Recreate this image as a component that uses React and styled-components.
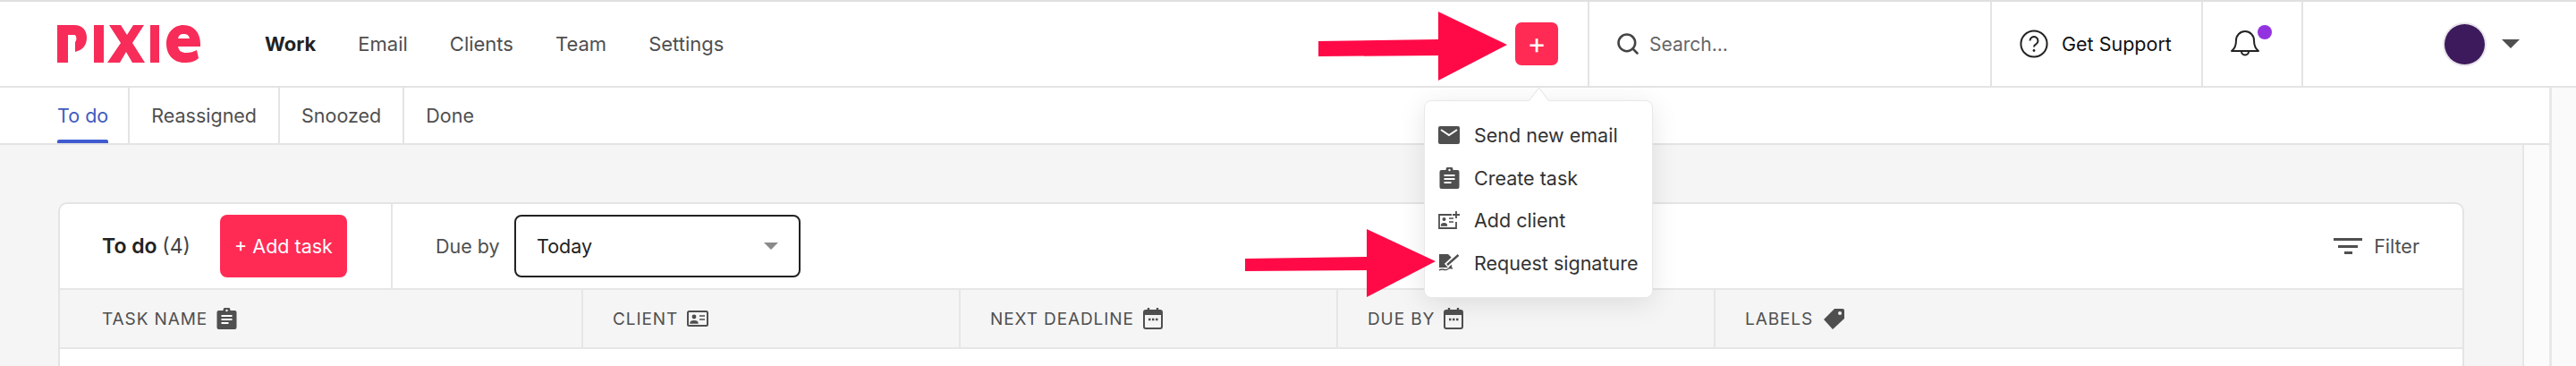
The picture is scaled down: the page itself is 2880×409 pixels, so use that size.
import React from 'react'
import styled, { createGlobalStyle } from 'styled-components'
import { Search } from 'lucide-react'

const pink = '#ff2b55'
const ink = '#4f4f4f'

const Global = createGlobalStyle`
  html, body { margin: 0; padding: 0; height: 409px; overflow: hidden; background: #f5f5f5; }
  body { font-family: Inter, "Liberation Sans", sans-serif; color: #333; }
`
const Page = styled.div`
  position: relative;
  width: 2880px;
  height: 409px;
  overflow: hidden;
  display: flex;
  flex-direction: column;
`
const TopBar = styled.header`
  height: 94px;
  flex-shrink: 0;
  display: flex;
  align-items: stretch;
  background: #fff;
  border-top: 2px solid #e0e0e0;
  border-bottom: 2px solid #e4e4e4;
`
const Logo = styled.svg`
  width: 160px;
  height: 42px;
  margin: 26px 0 0 64px;
  flex-shrink: 0;
`
const Nav = styled.nav`
  display: flex;
  align-items: center;
  gap: 47px;
  margin-left: 72px;
  flex: 1;
  font-size: 22px;
  color: ${ink};
`
const NavLink = styled.span`
  font-weight: ${p => (p.$active ? 700 : 400)};
  color: ${p => (p.$active ? '#222' : ink)};
`
const PlusCell = styled.div`
  width: 81px;
  display: flex;
  align-items: center;
  flex-shrink: 0;
`
const PlusButton = styled.button`
  width: 48px;
  height: 48px;
  border: 0;
  padding: 0;
  border-radius: 7px;
  background: ${pink};
  color: #fff;
  font: 400 32px/48px Inter, sans-serif;
`
const Cell = styled.div`
  display: flex;
  align-items: center;
  width: ${p => p.$w}px;
  flex-shrink: 0;
  border-left: 2px solid #e4e4e4;
  box-sizing: border-box;
  padding-left: ${p => p.$pad || 0}px;
`
const SearchText = styled.span`
  font-size: 21px;
  color: #666;
  margin-left: 10px;
`
const SupportText = styled.span`
  font-size: 21.5px;
  color: #111;
  margin-left: 15px;
`
const Bell = styled.div`
  position: relative;
  width: 48px;
  height: 36px;
`
const BellDot = styled.span`
  position: absolute;
  left: 31px;
  top: -3px;
  width: 16px;
  height: 16px;
  border-radius: 50%;
  background: #9333e0;
`
const Avatar = styled.span`
  width: 45px;
  height: 45px;
  border-radius: 50%;
  background: #3d1a5c;
  box-shadow: 0 0 0 2px #e8e4ea;
`
const Caret = styled.span`
  display: block;
  width: 0;
  height: 0;
  border-left: ${p => p.$size}px solid transparent;
  border-right: ${p => p.$size}px solid transparent;
  border-top: ${p => p.$size}px solid ${p => p.$color};
`
const AvatarCaret = styled(Caret)`
  margin-left: 19px;
`
const Tabs = styled.div`
  height: 62px;
  flex-shrink: 0;
  width: 2850px;
  display: flex;
  background: #fff;
  border-bottom: 2px solid #e4e4e4;
`
const Tab = styled.div`
  position: relative;
  display: flex;
  align-items: center;
  padding: 0 ${p => (p.$active ? 22 : 24)}px 0 24px;
  font-size: 21.5px;
  color: ${p => (p.$active ? '#3f5bbf' : ink)};
  border-right: ${p => (p.$last ? 0 : '2px solid #e4e4e4')};
  &:first-child { margin-left: 40px; }
  ${p => p.$active && `
    &::after {
      content: '';
      position: absolute;
      left: 24px;
      right: 22px;
      bottom: 0;
      height: 4px;
      border-radius: 2px 2px 0 0;
      background: #3f5bd0;
    }
  `}
`
const Body = styled.main`
  flex: 1;
  display: flex;
  min-height: 0;
`
const Content = styled.div`
  width: 2820px;
  flex-shrink: 0;
  box-sizing: border-box;
  padding: 64px 65px 0;
`
const ScrollTrack = styled.div`
  width: 30px;
  flex-shrink: 0;
  box-sizing: border-box;
  background: #fbfbfb;
  border-left: 2px solid #e6e6e6;
`
const ScrollEdge = styled.div`
  flex: 1;
  background: #fafafa;
  border-left: 3px solid #e8e8e8;
  margin-top: -64px;
`
const Card = styled.section`
  width: 2690px;
  background: #fff;
  border: 2px solid #e4e4e4;
  border-bottom: 0;
  border-radius: 10px 10px 0 0;
  box-sizing: border-box;
  height: 200px;
`
const Toolbar = styled.div`
  height: 94px;
  display: flex;
  align-items: stretch;
  border-bottom: 2px solid #e6e6e6;
`
const ToolLeft = styled.div`
  width: 372px;
  display: flex;
  align-items: center;
  padding-left: 47px;
  box-sizing: border-box;
  border-right: 2px solid #e6e6e6;
`
const ToolTitle = styled.span`
  font-size: 23px;
  font-weight: 600;
  color: #222;
  width: 132px;
`
const ToolCount = styled.span`
  font-weight: 400;
  color: #444;
`
const AddButton = styled.button`
  width: 142px;
  height: 70px;
  border: 0;
  border-radius: 8px;
  background: ${pink};
  color: #fff;
  font: 400 21.5px Inter, sans-serif;
`
const ToolRight = styled.div`
  flex: 1;
  display: flex;
  align-items: center;
  padding: 0 48px;
`
const DueLabel = styled.span`
  font-size: 21.5px;
  color: ${ink};
  width: 88px;
`
const Select = styled.div`
  width: 320px;
  height: 70px;
  box-sizing: border-box;
  border: 2px solid #222;
  border-radius: 8px;
  display: flex;
  align-items: center;
  justify-content: space-between;
  padding: 0 23px;
  font-size: 21.5px;
  color: #222;
`
const FilterBox = styled.div`
  margin-left: auto;
  display: flex;
  align-items: center;
  gap: 13px;
  font-size: 21.5px;
  color: ${ink};
`
const HeadRow = styled.div`
  height: 64px;
  display: flex;
  background: #f5f5f5;
  border-bottom: 2px solid #e6e6e6;
`
const HeadCell = styled.div`
  width: ${p => p.$w}px;
  box-sizing: border-box;
  display: flex;
  align-items: center;
  gap: 10px;
  padding-left: ${p => p.$pad || 33}px;
  border-right: ${p => (p.$last ? 0 : '2px solid #e6e6e6')};
  font-size: 19px;
  letter-spacing: 0.9px;
  color: ${ink};
  flex-shrink: 0;
  svg { flex-shrink: 0; }
`
const Dropdown = styled.div`
  position: absolute;
  left: 1592px;
  top: 112px;
  width: 256px;
  height: 221px;
  box-sizing: border-box;
  padding: 20px 15px;
  background: #fff;
  border-radius: 8px;
  border: 1px solid #e8e8e8;
  box-shadow: 0 6px 30px rgba(0, 0, 0, 0.1);
  display: flex;
  flex-direction: column;
  justify-content: space-between;
  &::before {
    content: '';
    position: absolute;
    left: 118px;
    top: -10px;
    width: 18px;
    height: 18px;
    background: #fff;
    border-top: 1px solid #e4e4e4;
    border-left: 1px solid #e4e4e4;
    transform: rotate(45deg) skew(8deg, 8deg);
  }
`
const MenuItem = styled.div`
  display: flex;
  align-items: center;
  gap: 16px;
  font-size: 21.5px;
  color: #333;
  height: 36px;
  white-space: nowrap;
  position: relative;
`
const MenuIcon = styled.span`
  width: 24px;
  height: 24px;
  display: flex;
  align-items: center;
  justify-content: center;
  flex-shrink: 0;
`
const Arrow = styled.svg`
  position: absolute;
  left: 0;
  top: 0;
  width: 2880px;
  height: 409px;
  pointer-events: none;
`

const MailIcon = () => (
  <svg width="24" height="20" viewBox="0 0 24 20">
    <rect width="24" height="20" rx="2" fill={ink} />
    <path d="M3 4l9 6 9-6" stroke="#fff" strokeWidth="2" fill="none" />
  </svg>
)
const TaskIcon = () => (
  <svg width="23" height="24" viewBox="0 0 22 24">
    <path d="M2 3h5a4 4 0 0 1 8 0h5a2 2 0 0 1 2 2v17a2 2 0 0 1-2 2H2a2 2 0 0 1-2-2V5a2 2 0 0 1 2-2z" fill={ink} />
    <path d="M5 9h12M5 13h12M5 17h8" stroke="#fff" strokeWidth="2" />
    <circle cx="11" cy="3" r="1.2" fill="#fff" />
  </svg>
)
const ClientIcon = () => (
  <svg width="24" height="18" viewBox="0 0 24 18">
    <rect x="1" y="1" width="22" height="16" rx="1.5" fill="none" stroke={ink} strokeWidth="2" />
    <circle cx="8" cy="7" r="2.4" fill={ink} />
    <path d="M4 14c0-3 8-3 8 0zM14 6h6M14 10h6" fill={ink} stroke={ink} strokeWidth="1.4" />
  </svg>
)
const AddClientIcon = () => (
  <svg width="24" height="20" viewBox="0 0 24 20">
    <path d="M15 4H1v15h19v-7" fill="none" stroke={ink} strokeWidth="1.8" />
    <circle cx="6.500" cy="9" r="2" fill={ink} />
    <path d="M3.500 16c0-3 6-3 6 0zM12 8h5M12 12h5" fill={ink} stroke={ink} strokeWidth="1.3" />
    <path d="M20 0v8M16 4h8" stroke={ink} strokeWidth="1.8" />
  </svg>
)
const SignIcon = () => (
  <svg width="24" height="19" viewBox="0 0 24 19">
    <path d="M1 0h10l4 4v11H1z" fill={ink} />
    <path d="M9 13L22 1" stroke="#fff" strokeWidth="6" />
    <path d="M10 12L22.500 1" stroke={ink} strokeWidth="2.400" />
    <path d="M1 18c4-3 6 1 9-1s4-2 6-1" stroke={ink} strokeWidth="1.400" fill="none" />
  </svg>
)
const CalendarIcon = () => (
  <svg width="22" height="24" viewBox="0 0 22 24">
    <path d="M6 0v5M16 0v5" stroke={ink} strokeWidth="2.4" />
    <rect x="1" y="3" width="20" height="20" rx="2" fill="none" stroke={ink} strokeWidth="2" />
    <rect x="1" y="3" width="20" height="5" fill={ink} />
    <path d="M6 13h2.500M10 13h2.500M14 13h2.500" stroke={ink} strokeWidth="2.400" />
  </svg>
)
const TagIcon = () => (
  <svg width="26" height="25" viewBox="0 0 26 25">
    <path d="M14 1h9a2 2 0 0 1 2 2v9L12 24 2 13z" fill={ink} />
    <circle cx="20" cy="6" r="2" fill="#f5f5f5" />
  </svg>
)
const FilterIcon = () => (
  <svg width="32" height="18" viewBox="0 0 32 18">
    <path d="M0 1.500h32M5 9.500h22M12 16.500h9" stroke={ink} strokeWidth="3" />
  </svg>
)
const HelpIcon = () => (
  <svg width="32" height="32" viewBox="0 0 32 32">
    <circle cx="16" cy="16" r="14.600" fill="none" stroke="#222" strokeWidth="2" />
    <path d="M11.500 12.500a4.500 4.500 0 1 1 6.800 3.900c-1.500.9-2.300 1.600-2.300 3.100" fill="none" stroke="#222" strokeWidth="2" />
    <circle cx="16" cy="23.500" r="1.400" fill="#222" />
  </svg>
)
const BellIcon = () => (
  <svg width="34" height="34" viewBox="0 0 34 34">
    <path d="M2 26c4-3 5-6 5-12a10 10 0 0 1 20 0c0 6 1 9 5 12z" fill="none" stroke="#222" strokeWidth="2" strokeLinejoin="round" />
    <path d="M13 26.500a4 4 0 0 0 8 0" fill="none" stroke="#222" strokeWidth="2" />
  </svg>
)

const menu = [
  { label: 'Send new email', icon: <MailIcon /> },
  { label: 'Create task', icon: <TaskIcon /> },
  { label: 'Add client', icon: <AddClientIcon /> },
  { label: 'Request signature', icon: <SignIcon /> },
]

const App = () => (
  <Page>
    <Global />
    <TopBar>
      <Logo viewBox="0 0 160 42">
        <g fill="#f72c58" fillRule="evenodd">
          <path d="M0 0H19C28 0 33 6 33 14C33 23 28 28 20 30V19C22 18 22 11 19 11H12V42H0Z" />
          <rect x="41" y="0" width="11" height="42" />
          <path d="M58 0H71L78 11L85 0H97L84 20L98 42H84L77 30L70 42H56L71 20Z" />
          <rect x="104" y="0" width="10" height="42" />
          <path d="M141 0C153 0 160 9 160 21V24H135C136 29 139 31 144 31C149 31 152 30 156 28L158 37C154 41 149 42 142 42C130 42 122 33 122 21C122 9 130 0 141 0ZM135 15H148C147 11 145 10 141 10C138 10 136 11 135 15Z" />
        </g>
      </Logo>
      <Nav>
        <NavLink $active>Work</NavLink>
        <NavLink>Email</NavLink>
        <NavLink>Clients</NavLink>
        <NavLink>Team</NavLink>
        <NavLink>Settings</NavLink>
      </Nav>
      <PlusCell>
        <PlusButton>+</PlusButton>
      </PlusCell>
      <Cell $w={450} $pad={29}>
        <Search size={28} color="#444" strokeWidth={2.2} />
        <SearchText>Search...</SearchText>
      </Cell>
      <Cell $w={236} $pad={31}>
        <HelpIcon />
        <SupportText>Get Support</SupportText>
      </Cell>
      <Cell $w={112} $pad={30}>
        <Bell>
          <BellIcon />
          <BellDot />
        </Bell>
      </Cell>
      <Cell $w={307} $pad={158}>
        <Avatar />
        <AvatarCaret $size={10} $color={ink} />
      </Cell>
    </TopBar>
    <Tabs>
      <Tab $active>To do</Tab>
      <Tab>Reassigned</Tab>
      <Tab>Snoozed</Tab>
      <Tab $last>Done</Tab>
    </Tabs>
    <Body>
      <Content>
        <Card>
          <Toolbar>
            <ToolLeft>
              <ToolTitle>To do <ToolCount>(4)</ToolCount></ToolTitle>
              <AddButton>+ Add task</AddButton>
            </ToolLeft>
            <ToolRight>
              <DueLabel>Due by</DueLabel>
              <Select>
                Today
                <Caret $size={8} $color="#8a8a8a" />
              </Select>
              <FilterBox>
                <FilterIcon />
                Filter
              </FilterBox>
            </ToolRight>
          </Toolbar>
          <HeadRow>
            <HeadCell $w={585} $pad={47}>TASK NAME <TaskIcon /></HeadCell>
            <HeadCell $w={422}>CLIENT <ClientIcon /></HeadCell>
            <HeadCell $w={422}>NEXT DEADLINE <CalendarIcon /></HeadCell>
            <HeadCell $w={422}>DUE BY <CalendarIcon /></HeadCell>
            <HeadCell $w={835} $last>LABELS <TagIcon /></HeadCell>
          </HeadRow>
        </Card>
      </Content>
      <ScrollTrack />
      <ScrollEdge />
    </Body>
    <Dropdown>
      {menu.map(item => (
        <MenuItem key={item.label}>
          <MenuIcon>{item.icon}</MenuIcon>
          {item.label}
        </MenuItem>
      ))}
    </Dropdown>
    <Arrow viewBox="0 0 2880 409">
      <path d="M1474 46l134-2V13l77 37-77 40V62l-134 1z" fill="#ff0a47" />
      <path d="M1392 289l136-2v-31l77 36-77 40v-30l-136 1z" fill="#ff0a47" />
    </Arrow>
  </Page>
)

export default App
